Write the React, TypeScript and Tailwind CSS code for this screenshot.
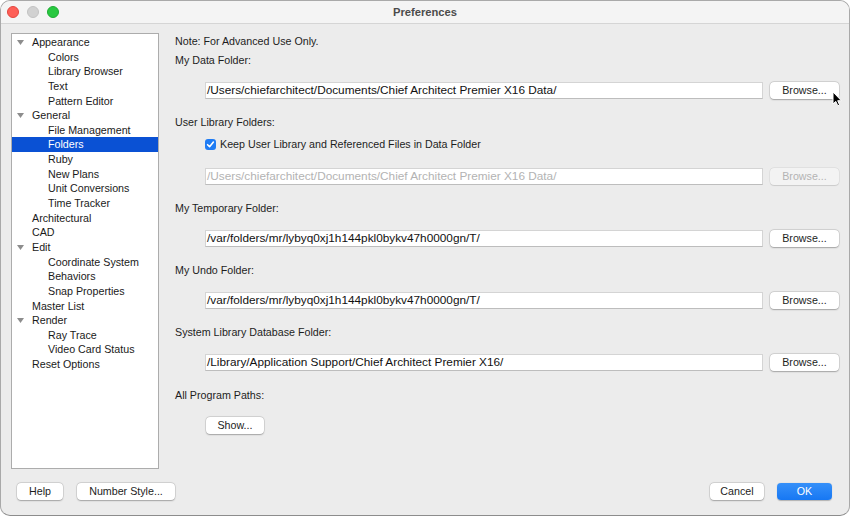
import React from "react";

type Item = { label: string; level: 0 | 1; expandable?: boolean; selected?: boolean };

const items: Item[] = [
  { label: "Appearance", level: 0, expandable: true },
  { label: "Colors", level: 1 },
  { label: "Library Browser", level: 1 },
  { label: "Text", level: 1 },
  { label: "Pattern Editor", level: 1 },
  { label: "General", level: 0, expandable: true },
  { label: "File Management", level: 1 },
  { label: "Folders", level: 1, selected: true },
  { label: "Ruby", level: 1 },
  { label: "New Plans", level: 1 },
  { label: "Unit Conversions", level: 1 },
  { label: "Time Tracker", level: 1 },
  { label: "Architectural", level: 0 },
  { label: "CAD", level: 0 },
  { label: "Edit", level: 0, expandable: true },
  { label: "Coordinate System", level: 1 },
  { label: "Behaviors", level: 1 },
  { label: "Snap Properties", level: 1 },
  { label: "Master List", level: 0 },
  { label: "Render", level: 0, expandable: true },
  { label: "Ray Trace", level: 1 },
  { label: "Video Card Status", level: 1 },
  { label: "Reset Options", level: 0 },
];

const font = { fontFamily: '"Liberation Sans", Arial, sans-serif' };

function Btn({ children, w, disabled }: { children: React.ReactNode; w: string; disabled?: boolean }) {
  return (
    <div
      className={`${w} h-[17px] shrink-0 flex items-center justify-center rounded-[4px] text-[10.7px] leading-none ${
        disabled
          ? "bg-[#f3f3f3] text-[#b4b4b4] shadow-[0_0_0_0.5px_rgba(0,0,0,0.08),0_0.5px_1px_rgba(0,0,0,0.1)]"
          : "bg-white text-[#1d1d1d] shadow-[0_0_0_0.5px_rgba(0,0,0,0.14),0_0.5px_1.5px_rgba(0,0,0,0.25)]"
      }`}
    >
      {children}
    </div>
  );
}

function PathRow({ path, disabled, top }: { path: string; disabled?: boolean; top: string }) {
  return (
    <div className={`flex items-center ${top} pl-[30px]`}>
      <div
        className={`flex-1 h-[17px] bg-white border border-[#d4d4d4] border-b-[#bdbdbd] flex items-center pl-[1px] text-[11.8px] leading-none ${
          disabled ? "text-[#b3b3b3]" : "text-[#111]"
        }`}
      >
        {path}
      </div>
      <div className="w-[7px] shrink-0" />
      <Btn w="w-[69px]" disabled={disabled}>
        Browse...
      </Btn>
    </div>
  );
}

function Label({ children, top }: { children: React.ReactNode; top: string }) {
  return <div className={`${top} h-[14px] leading-[14px] text-[10.7px] text-[#1d1d1d]`}>{children}</div>;
}

export default function App() {
  return (
    <div className="relative w-[850px] h-[516px] bg-white overflow-hidden" style={font}>
      <div className="w-[850px] h-[516px] rounded-[10px] border border-[#a9a9a9] border-b-[#8c8c8c] overflow-hidden flex flex-col bg-[#ececec]">
        {/* Title bar */}
        <div className="h-[23px] shrink-0 bg-[#f4f4f4] border-b border-[#d5d5d5] flex items-center relative">
          <div className="flex items-center gap-[8px] pl-[6px]">
            <div className="w-[12px] h-[12px] rounded-full bg-[#fe5f57] border border-[#e2463f]" />
            <div className="w-[12px] h-[12px] rounded-full bg-[#d1d1d1] border border-[#c2c2c2]" />
            <div className="w-[12px] h-[12px] rounded-full bg-[#28c840] border border-[#1eab32]" />
          </div>
          <div className="absolute inset-0 flex items-center justify-center text-[11.2px] font-bold text-[#4b4b4b]">
            Preferences
          </div>
        </div>

        {/* Content */}
        <div className="flex-1 flex flex-col">
          <div className="flex pt-[9px] pl-[10px] pr-[10px]">
            {/* Sidebar */}
            <div className="w-[148px] h-[436px] shrink-0 bg-white border border-[#acacac] pt-[1px]">
              {items.map((it) => (
                <div
                  key={it.label}
                  className={`h-[14.65px] flex items-center relative text-[10.7px] leading-none ${
                    it.selected ? "bg-[#0a51d4] text-white" : "text-[#1a1a1a]"
                  }`}
                >
                  {it.expandable && (
                    <svg className="absolute left-[5px] top-[5px]" width="7" height="5" viewBox="0 0 7 5">
                      <path d="M0 0 L7 0 L3.5 5 Z" fill="#8d8d8d" />
                    </svg>
                  )}
                  <span className={it.level === 0 ? "pl-[20px]" : "pl-[36px]"}>{it.label}</span>
                </div>
              ))}
            </div>

            {/* Right column */}
            <div className="flex-1 ml-[16px] pt-[1px] flex flex-col">
              <Label top="">Note: For Advanced Use Only.</Label>
              <Label top="mt-[5px]">My Data Folder:</Label>
              <PathRow top="mt-[15px]" path="/Users/chiefarchitect/Documents/Chief Architect Premier X16 Data/" />
              <Label top="mt-[16px]">User Library Folders:</Label>
              <div className="mt-[8px] h-[14px] flex items-center pl-[30px]">
                <div className="w-[11px] h-[11px] rounded-[3px] bg-[#1f7cf4] flex items-center justify-center">
                  <svg width="9" height="9" viewBox="0 0 9 9">
                    <path d="M1.6 4.7 L3.6 6.7 L7.4 2" fill="none" stroke="white" strokeWidth="1.6" strokeLinecap="round" strokeLinejoin="round" />
                  </svg>
                </div>
                <span className="ml-[4px] text-[10.7px] text-[#1d1d1d] leading-none">
                  Keep User Library and Referenced Files in Data Folder
                </span>
              </div>
              <PathRow top="mt-[17px]" disabled path="/Users/chiefarchitect/Documents/Chief Architect Premier X16 Data/" />
              <Label top="mt-[16px]">My Temporary Folder:</Label>
              <PathRow top="mt-[15px]" path="/var/folders/mr/lybyq0xj1h144pkl0bykv47h0000gn/T/" />
              <Label top="mt-[16px]">My Undo Folder:</Label>
              <PathRow top="mt-[15px]" path="/var/folders/mr/lybyq0xj1h144pkl0bykv47h0000gn/T/" />
              <Label top="mt-[16px]">System Library Database Folder:</Label>
              <PathRow top="mt-[15px]" path="/Library/Application Support/Chief Architect Premier X16/" />
              <Label top="mt-[17px]">All Program Paths:</Label>
              <div className="mt-[15px] pl-[31px]">
                <Btn w="w-[58px]">Show...</Btn>
              </div>
            </div>
          </div>

          {/* Bottom buttons */}
          <div className="flex items-center mt-[14px] pl-[16px] pr-[17px]">
            <Btn w="w-[46px]">Help</Btn>
            <div className="w-[14px]" />
            <Btn w="w-[98px]">Number Style...</Btn>
            <div className="flex-1" />
            <Btn w="w-[54px]">Cancel</Btn>
            <div className="w-[13px]" />
            <div className="w-[55px] h-[17px] flex items-center justify-center rounded-[4px] bg-gradient-to-b from-[#3590f9] to-[#1677f3] text-white text-[10.7px] leading-none shadow-[0_0.5px_1px_rgba(0,0,0,0.25)]">
              OK
            </div>
          </div>
        </div>
      </div>

      {/* Mouse cursor */}
      <svg className="absolute left-[832px] top-[91px]" width="11" height="16" viewBox="0 0 11 16">
        <path d="M1 1 L1 13 L3.8 10.4 L5.8 14.8 L7.6 14 L5.7 9.7 L9.4 9.7 Z" fill="black" stroke="white" strokeWidth="1" strokeLinejoin="round" />
      </svg>
    </div>
  );
}
